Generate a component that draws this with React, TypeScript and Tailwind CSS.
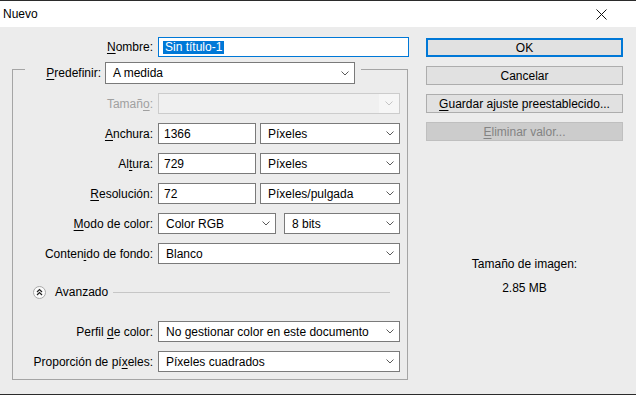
import React from "react";

const Chevron = ({ disabled }: { disabled?: boolean }) => (
  <svg width="8" height="5" viewBox="0 0 8 5" className="shrink-0">
    <polyline
      points="0.5,0.5 4,4 7.5,0.5"
      fill="none"
      stroke={disabled ? "#c4c4c4" : "#5a5a5a"}
      strokeWidth="1"
    />
  </svg>
);

const Select = ({ value, className }: { value: string; className: string }) => (
  <div
    className={`flex items-center justify-between border border-[#7a7a7a] bg-white pl-[7px] pr-[5px] ${className}`}
  >
    <span className="whitespace-nowrap">{value}</span>
    <Chevron />
  </div>
);

const TextBox = ({ value, className }: { value: string; className: string }) => (
  <div className={`flex items-center border border-[#7a7a7a] bg-white pl-[5px] ${className}`}>
    {value}
  </div>
);

const Row = ({
  label,
  children,
  className = "",
}: {
  label: React.ReactNode;
  children: React.ReactNode;
  className?: string;
}) => (
  <div className={`flex h-[21px] items-stretch ${className}`}>
    <div className="flex w-[140px] items-center justify-end whitespace-nowrap">{label}</div>
    <div className="ml-[5px] flex w-[242px]">{children}</div>
  </div>
);

const U = ({ children }: { children: React.ReactNode }) => <span className="underline underline-offset-2">{children}</span>;

const App = () => {
  return (
    <div className="box-border flex h-[395px] w-[636px] flex-col border-y border-[#2b2b2b] bg-[#ececec] font-['Liberation_Sans',Arial,sans-serif] text-[12px] text-black">
      {/* title bar */}
      <div className="flex h-[26px] items-center justify-between bg-white pl-[3px] pr-[29px]">
        <span>Nuevo</span>
        <svg width="11" height="11" viewBox="0 0 11 11">
          <path d="M0.5 0.5 L10.5 10.5 M10.5 0.5 L0.5 10.5" stroke="#111" strokeWidth="1" />
        </svg>
      </div>

      <div className="flex flex-1">
        {/* left side */}
        <div className="w-[410px] pt-[10px]">
          <div className="flex h-[20px] items-stretch">
            <div className="flex w-[153px] items-center justify-end">
              <span>
                <U>N</U>ombre:
              </span>
            </div>
            <div className="ml-[5px] flex w-[251px] items-center border border-[#0078d7] bg-white pl-[4px]">
              <span className="bg-[#0078d7] px-[2px] leading-[13px] text-white">Sin título-1</span>
            </div>
          </div>

          <div className="ml-[12px] mt-[12px] flex w-[396px] flex-col border border-[#a5a5a5] pb-[7px]">
            <div className="-mt-[8px] ml-[12px] flex h-[22px] w-[336px] items-stretch justify-end bg-[#ececec] pr-[6px]">
              <div className="flex items-center">
                <span>
                  <U>P</U>redefinir:
                </span>
              </div>
              <Select value="A medida" className="ml-[4px] w-[250px]" />
            </div>

            <Row
              className="mt-[9px]"
              label={
                <span className="text-[#a0a0a0]">
                  Tamañ<U>o</U>:
                </span>
              }
            >
              <div className="flex w-full items-center justify-end border border-[#cccccc] bg-[#f0f0f0]">
                <div className="flex h-full w-[20px] items-center justify-center bg-[#f6f6f6]">
                  <Chevron disabled />
                </div>
              </div>
            </Row>

            <Row
              className="mt-[9px]"
              label={
                <span>
                  <U>A</U>nchura:
                </span>
              }
            >
              <TextBox value="1366" className="w-[98px]" />
              <Select value="Píxeles" className="ml-[4px] w-[140px]" />
            </Row>

            <Row
              className="mt-[9px]"
              label={
                <span>
                  Al<U>t</U>ura:
                </span>
              }
            >
              <TextBox value="729" className="w-[98px]" />
              <Select value="Píxeles" className="ml-[4px] w-[140px]" />
            </Row>

            <Row
              className="mt-[9px]"
              label={
                <span>
                  <U>R</U>esolución:
                </span>
              }
            >
              <TextBox value="72" className="w-[98px]" />
              <Select value="Píxeles/pulgada" className="ml-[4px] w-[140px]" />
            </Row>

            <Row
              className="mt-[9px]"
              label={
                <span>
                  <U>M</U>odo de color:
                </span>
              }
            >
              <Select value="Color RGB" className="w-[118px]" />
              <Select value="8 bits" className="ml-[8px] w-[116px]" />
            </Row>

            <Row
              className="mt-[9px]"
              label={
                <span>
                  Conten<U>i</U>do de fondo:
                </span>
              }
            >
              <Select value="Blanco" className="w-full" />
            </Row>

            <div className="mt-[21px] flex h-[14px] items-center">
              <svg width="13" height="13" viewBox="0 0 13 13" className="ml-[20px] shrink-0">
                <circle cx="6.5" cy="6.5" r="6" fill="#fbfbfb" stroke="#a8a8a8" />
                <polyline points="4,6 6.5,3.5 9,6" fill="none" stroke="#222" strokeWidth="1.2" />
                <polyline points="4,9 6.5,6.5 9,9" fill="none" stroke="#222" strokeWidth="1.2" />
              </svg>
              <span className="ml-[9px]">Avanzado</span>
              <div className="ml-[5px] mr-[17px] h-px flex-1 bg-[#c6c6c6]" />
            </div>

            <Row
              className="mt-[22px]"
              label={
                <span>
                  Perfil <U>d</U>e color:
                </span>
              }
            >
              <Select value="No gestionar color en este documento" className="w-full" />
            </Row>

            <Row
              className="mt-[9px]"
              label={
                <span>
                  Proporción de pí<U>x</U>eles:
                </span>
              }
            >
              <Select value="Píxeles cuadrados" className="w-full" />
            </Row>
          </div>
        </div>

        {/* right side */}
        <div className="ml-[16px] flex w-[197px] flex-col pt-[11px]">
          <div className="flex flex-col gap-[9px]">
            <div className="flex h-[19px] items-center justify-center border-2 border-[#0078d7] bg-[#e1e1e1]">OK</div>
            <div className="flex h-[19px] items-center justify-center border border-[#adadad] bg-[#e1e1e1]">Cancelar</div>
            <div className="flex h-[19px] items-center justify-center border border-[#adadad] bg-[#e1e1e1]">
              <span>
                <U>G</U>uardar ajuste preestablecido...
              </span>
            </div>
            <div className="flex h-[19px] items-center justify-center border border-[#bfbfbf] bg-[#cccccc] text-[#838383]">
              <span>
                <U>E</U>liminar valor...
              </span>
            </div>
          </div>
          <div className="mt-[111px] text-center leading-[24px]">
            <div>Tamaño de imagen:</div>
            <div>2.85 MB</div>
          </div>
        </div>
      </div>
    </div>
  );
};

export default App;
